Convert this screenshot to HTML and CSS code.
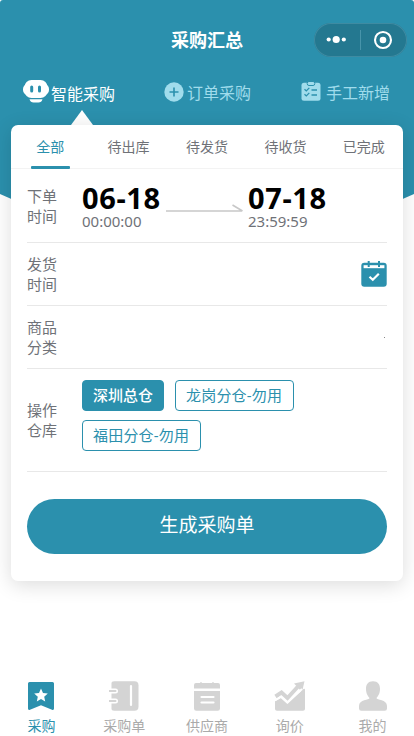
FILE: index.html
```html
<!DOCTYPE html>
<html lang="zh-CN">
<head>
<meta charset="utf-8">
<meta name="viewport" content="width=device-width, initial-scale=1">
<title>采购汇总</title>
<link rel="stylesheet" href="styles.css">
</head>
<body>
<div class="app">
  <div class="backdrop"></div>
  <header class="navbar">
    <h1 class="title">采购汇总</h1>
    <div class="capsule">
      <svg width="92" height="34" viewBox="0 0 92 34">
        <g fill="#fff"><circle cx="14.7" cy="16.5" r="2.1"/><circle cx="22.2" cy="16.5" r="3.6"/><circle cx="29.8" cy="16.5" r="2.1"/><circle cx="69" cy="17" r="3.3"/></g>
        <path d="M46.5 7v20" stroke="#4794aa"/>
        <circle cx="69" cy="17" r="8" fill="none" stroke="#fff" stroke-width="2.1"/>
      </svg>
    </div>
  </header>
  <nav class="modes">
    <a class="mode mode-active">
      <svg width="26" height="23" viewBox="0 0 26 23">
        <rect x="0" y="4" width="26" height="11" rx="5" fill="#fff"/>
        <rect x="1.5" y="0" width="23" height="18" rx="7" fill="#fff"/>
        <path d="M6.5 19.3h13q-1 3.3-4 3.3h-5q-3 0-4-3.3z" fill="#fff"/>
        <g fill="#2b90ad"><rect x="7.2" y="5.5" width="3" height="7" rx="1.5"/><rect x="15" y="5.5" width="3" height="7" rx="1.5"/></g>
      </svg>
      <span>智能采购</span>
    </a>
    <a class="mode mode-order">
      <svg width="20" height="20" viewBox="0 0 20 20"><circle cx="10" cy="10" r="9.7" fill="#a0dcec"/><path d="M10 5.5v9M5.5 10h9" stroke="#2b90ad" stroke-width="1.6"/></svg>
      <span>订单采购</span>
    </a>
    <a class="mode mode-manual">
      <svg width="20" height="20" viewBox="0 0 20 20">
        <rect x=".5" y="1.8" width="19" height="18" rx="2.5" fill="#a0dcec"/>
        <rect x="6.2" y=".5" width="7.6" height="4" rx="1.8" fill="#a0dcec" stroke="#2b90ad"/>
        <path d="M3.5 8.2l1.8 1.7 3-3M3.5 13.2l1.8 1.7 3-3M10.5 9H16M10.5 14H16" fill="none" stroke="#2b90ad" stroke-width="1.3"/>
      </svg>
      <span>手工新增</span>
    </a>
  </nav>
  <main class="card">
    <div class="tabs">
      <a class="tab tab-active">全部</a><a class="tab">待出库</a><a class="tab">待发货</a><a class="tab">待收货</a><a class="tab">已完成</a>
    </div>
    <section class="row row-order">
      <div class="label">下单时间</div>
      <div class="range">
        <div class="moment"><div class="date">06-18</div><div class="time">00:00:00</div></div>
        <svg class="arrow" width="78" height="10" viewBox="0 0 78 10"><path d="M0 8h76M66.500 2l10 6" fill="none" stroke="#c8c8c8" stroke-width="1.6"/></svg>
        <div class="moment"><div class="date">07-18</div><div class="time">23:59:59</div></div>
      </div>
    </section>
    <section class="row">
      <div class="label">发货时间</div>
      <svg class="calendar" width="26" height="26" viewBox="0 0 26 26">
        <rect x=".3" y="1.8" width="25.4" height="24" rx="3" fill="#2b90ad"/>
        <path d="M2.6 4.2h20.8v3H2.6z" fill="#fff"/>
        <path d="M7.7 0v6M18 0v6" stroke="#2b90ad" stroke-width="2"/>
        <path d="M8.5 15.700l3.300 3.100 6-6" fill="none" stroke="#fff" stroke-width="2.2"/>
      </svg>
    </section>
    <section class="row">
      <div class="label">商品分类</div>
      <i class="speck"></i>
    </section>
    <section class="row row-depot">
      <div class="label">操作仓库</div>
      <div class="chips">
        <span class="chip chip-on">深圳总仓</span><span class="chip chip-long">龙岗分仓-勿用</span><span class="chip chip-long">福田分仓-勿用</span>
      </div>
    </section>
    <button class="submit">生成采购单</button>
  </main>
  <footer class="tabbar">
    <a class="item item-active">
      <svg width="30" height="30" viewBox="0 0 30 30"><path d="M3.5 1h23q1.5 0 1.5 1.5v25q0 2-2 1.2L15 24.3 4 28.7q-2 .8-2-1.2v-25Q2 1 3.5 1z" fill="#2b90ad"/><path d="M15 7.500l2 4.500 4.800.5-3.600 3.300 1 4.800-4.200-2.500-4.200 2.500 1-4.800-3.600-3.300L13 12z" fill="#fff"/></svg>
      <span>采购</span>
    </a>
    <a class="item">
      <svg width="30" height="30" viewBox="0 0 30 30"><rect x="1.500" y=".3" width="28" height="29.500" rx="4" fill="#d4d4d4"/><path d="M0 0h2.500v30H0z" fill="#fff"/><path d="M0 10h6.500M0 20h6.500" stroke="#fff" stroke-width="5" stroke-linecap="round"/><path d="M0 10h6.500M0 20h6.500" stroke="#d4d4d4" stroke-width="2" stroke-linecap="round"/><path d="M22 5v19" stroke="#fff" stroke-width="2.200" stroke-linecap="round"/></svg>
      <span>采购单</span>
    </a>
    <a class="item">
      <svg width="30" height="30" viewBox="0 0 30 30"><path d="M4 2h4q1-2 2 0h10q1-2 2 0h4q2 0 2 2v3.500H2V4q0-2 2-2zM2 10h26v17.500q0 2.300-2.300 2.300H4.300Q2 29.800 2 27.500z" fill="#d4d4d4"/><path d="M9.500 16h12M9.500 21.500h12" stroke="#fff" stroke-width="2.200" stroke-linecap="round"/></svg>
      <span>供应商</span>
    </a>
    <a class="item">
      <svg width="32" height="30" viewBox="0 0 32 30"><path d="M1.500 15.500l6-4 6 5.500L24 5.500" fill="none" stroke="#d4d4d4" stroke-width="4"/><path d="M20 2.500L30.500.3 28 11z" fill="#d4d4d4"/><path d="M1 20l6-3 6 5.500L29.500 8Q31 7 31 9v19q0 1.800-2 1.800H3q-2 0-2-1.800z" fill="#d4d4d4"/><path d="M1 19.500l6-3.800 6.500 6L28 8" fill="none" stroke="#fff" stroke-width="2"/></svg>
      <span>询价</span>
    </a>
    <a class="item">
      <svg width="30" height="30" viewBox="0 0 30 30"><path d="M15 .3c5 0 7 3.200 7 7.500 0 5-2 7.500-3.500 9.200 0 2.500 10.500 1 10.500 8v2.500q0 2.300-2.300 2.300H3.300Q1 29.800 1 27.500V25c0-7 10.500-5.500 10.500-8C10 15.300 8 12.800 8 7.800 8 3.500 10 .3 15 .3z" fill="#d4d4d4"/></svg>
      <span>我的</span>
    </a>
  </footer>
</div>
</body>
</html>
```
FILE: styles.css
```css
* { box-sizing: border-box; }
body {
  margin: 0;
  background: #fff;
  color: #6f7278;
  font-family: "Noto Sans", "Noto Sans CJK SC", sans-serif;
}
.app {
  position: relative;
  display: flex;
  flex-direction: column;
  width: 414px;
  height: 736px;
  overflow: hidden;
}
.backdrop {
  position: absolute;
  inset: 0 0 auto;
  height: 290px;
  background: #2b90ad;
  border-radius: 3px 3px 0 0;
  clip-path: polygon(0 0, 100% 0, 100% 194px, 50% 285px, 0 194px);
}
.navbar, .modes, .card, .tabbar { position: relative; flex: none; }
.navbar { height: 70px; padding-top: 23px; display: grid; grid-template-columns: 1fr auto 1fr; }
.title {
  grid-column: 2;
  margin: 0;
  font-size: 18px;
  line-height: 34px;
  font-weight: 700;
  color: #fff;
}
.capsule {
  justify-self: end;
  width: 93px;
  height: 34px;
  margin-right: 7px;
  border-radius: 17px;
  background: #247890;
  box-shadow: inset 0 0 0 1px #3e8ba2;
}
.capsule svg { display: block; }
.modes { height: 55px; display: flex; color: #a0dcec; font-size: 16px; }
.mode { display: flex; align-items: flex-start; }
.mode span { line-height: 24px; margin-top: 11px; }
.mode-active { color: #fff; margin-left: 23px; width: 141px; position: relative; }
.mode-active svg { margin: 10px 2px 0 0; }
.mode-active span { margin-top: 12px; }
.mode-active::after {
  content: "";
  position: absolute;
  left: 48px;
  bottom: 0;
  border: 11px solid transparent;
  border-top: 0;
  border-bottom: 15px solid #fff;
}
.mode-order { width: 137px; }
.mode-order svg { margin: 12px 3px 0 0; }
.mode-manual svg { margin: 11px 5px 0 0; }
.card {
  width: 392px;
  height: 456px;
  margin-left: 11px;
  background: #fff;
  border-radius: 7px;
  box-shadow: 0 4px 20px rgba(0, 0, 0, .14);
}
.tabs { display: flex; height: 44px; border-bottom: 1px solid #f3f3f3; }
.tab { position: relative; flex: 1; text-align: center; font-size: 14px; line-height: 44px; }
.tab-active { color: #2b90ad; }
.tab-active::after {
  content: "";
  position: absolute;
  left: 20px;
  bottom: -1px;
  width: 39px;
  height: 3px;
  border-radius: 1px;
  background: #2b90ad;
}
.row {
  display: flex;
  align-items: center;
  height: 63px;
  margin: 0 16px;
  border-bottom: 1px solid #e8e8e8;
}
.row-order { height: 74px; }
.row-depot { height: 103px; }
.label { width: 30px; margin-right: 25px; font-size: 15px; line-height: 20px; flex: none; }
.range { display: flex; }
.moment { width: 83px; }
.date { font-size: 29px; line-height: 30px; font-weight: 700; letter-spacing: .6px; color: #000; }
.time { font-size: 15px; line-height: 16px; }
.arrow { margin: 20px 4px 0 1px; margin-left: 1px; }
.calendar { margin-left: auto; }
.speck { width: 1px; height: 1px; margin: 0 2px 0 auto; background: #888; }
.chips { display: flex; flex-wrap: wrap; gap: 9px 11px; padding-bottom: 9px; }
.chip {
  height: 31px;
  padding: 0 10px;
  border: 1px solid #2b90ad;
  border-radius: 4px;
  color: #2b90ad;
  font-size: 15px;
  line-height: 29px;
}
.chip-long { width: 119px; letter-spacing: .2px; white-space: nowrap; }
.chip-on { background: #2b90ad; color: #fff; font-weight: 500; }
.submit {
  display: block;
  width: 360px;
  height: 55px;
  margin: 27px 16px 0;
  padding: 0 0 7px;
  border: 0;
  border-radius: 28px;
  background: #2b90ad;
  color: #fff;
  font: 19px "Noto Sans CJK SC", sans-serif;
}
.tabbar { display: flex; height: 63px; margin-top: auto; padding-top: 8px; }
.item { flex: 1; display: flex; flex-direction: column; align-items: center; color: #aaa; font-size: 14px; }
.item span { line-height: 20px; margin-top: 5px; }
.item-active { color: #2b90ad; }
```
